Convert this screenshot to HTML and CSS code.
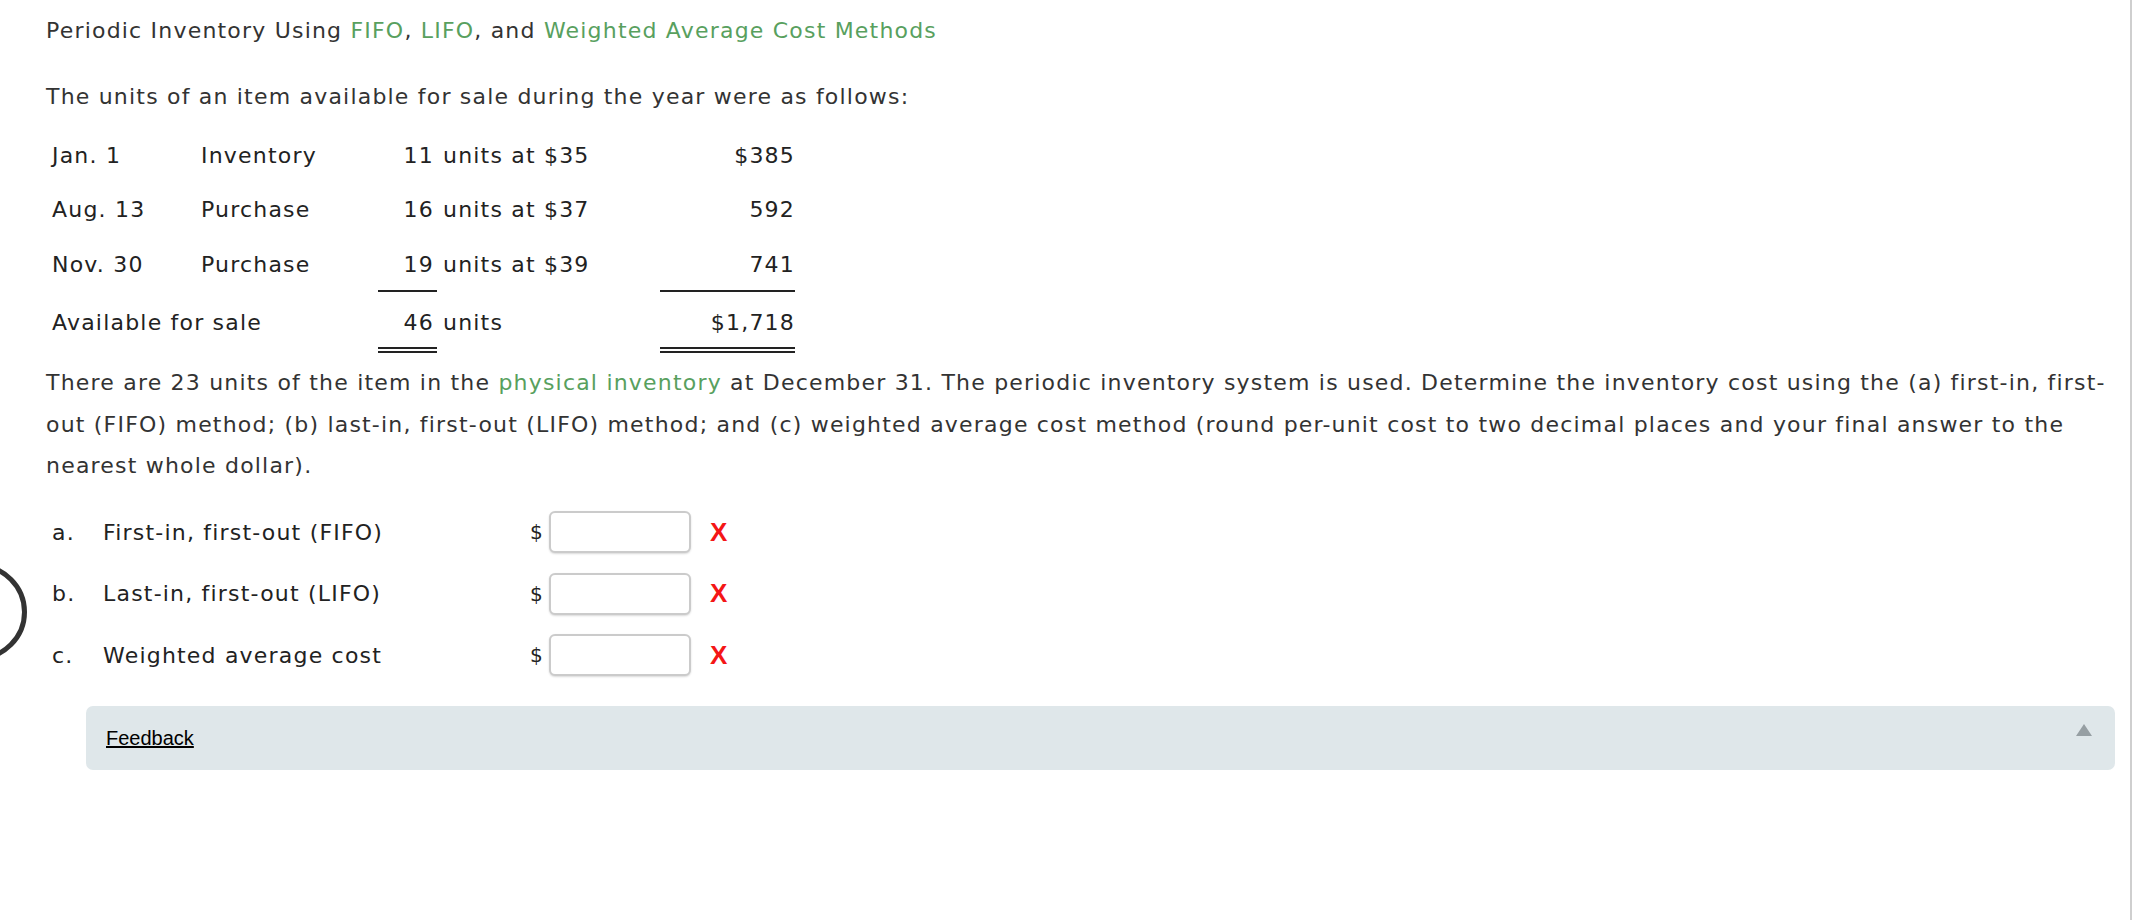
FILE: index.html
```html
<!DOCTYPE html>
<html>
<head>
<meta charset="utf-8">
<link rel="stylesheet" href="styles.css">
</head>
<body>
<div class="page">
  <svg class="ring" width="40" height="110" viewBox="0 0 40 110"><circle cx="-21.5" cy="55" r="46" fill="none" stroke="#333" stroke-width="5"/></svg>
  <p class="title">Periodic Inventory Using <span class="link">FIFO</span>, <span class="link">LIFO</span>, and <span class="link">Weighted Average Cost Methods</span></p>
  <p class="intro">The units of an item available for sale during the year were as follows:</p>
  <div class="ledger">
    <div class="c r1">Jan. 1</div><div class="c r1">Inventory</div><div class="c r1 num">11</div><div class="c r1 units">units at $35</div><div class="c r1 amt">$385</div>
    <div class="c r2">Aug. 13</div><div class="c r2">Purchase</div><div class="c r2 num">16</div><div class="c r2 units">units at $37</div><div class="c r2 amt">592</div>
    <div class="c r3">Nov. 30</div><div class="c r3">Purchase</div><div class="c r3 num line">19</div><div class="c r3 units">units at $39</div><div class="c r3 amt line">741</div>
    <div class="c r4 span2">Available for sale</div><div class="c r4 num dbl">46</div><div class="c r4 units">units</div><div class="c r4 amt dbl">$1,718</div>
  </div>
  <p class="body">There are 23 units of the item in the <span class="link">physical inventory</span> at December 31. The periodic inventory system is used. Determine the inventory cost using the (a) first-in, first-out (FIFO) method; (b) last-in, first-out (LIFO) method; and (c) weighted average cost method (round per-unit cost to two decimal places and your final answer to the nearest whole dollar).</p>
  <div class="answers">
    <div class="ans"><span class="letter">a.</span><span class="label">First-in, first-out (FIFO)</span><span class="cur">$</span><input class="box" type="text"><span class="wrong">X</span></div>
    <div class="ans"><span class="letter">b.</span><span class="label">Last-in, first-out (LIFO)</span><span class="cur">$</span><input class="box" type="text"><span class="wrong">X</span></div>
    <div class="ans"><span class="letter">c.</span><span class="label">Weighted average cost</span><span class="cur">$</span><input class="box" type="text"><span class="wrong">X</span></div>
  </div>
  <div class="feedback">
    <a class="fb-link" href="#">Feedback</a>
    <span class="tri"></span>
  </div>
</div>
</body>
</html>
```
FILE: styles.css
```css
html, body {
  margin: 0;
  padding: 0;
  background: #fff;
}
.page {
  position: relative;
  box-sizing: border-box;
  width: 2132px;
  min-height: 920px;
  padding: 0 15px 0 46px;
  border-right: 2px solid #cfcfcf;
  font-family: "DejaVu Sans", Verdana, sans-serif;
  font-size: 22px;
  letter-spacing: 1.2px;
  color: #333;
}
.ring {
  position: absolute;
  left: 0;
  top: 557px;
}
p {
  margin: 0;
}
.link {
  color: #58a05e;
}
.title {
  padding-top: 10px;
  line-height: 41px;
}
.intro {
  margin-top: 25px;
  line-height: 41px;
}
.ledger {
  margin-top: 11px;
  margin-left: 6px;
  display: grid;
  grid-template-columns: 149px 177px 59px 223px 135px;
  grid-template-rows: 54px 55px 55px 61px;
  color: #222;
}
.c {
  box-sizing: border-box;
  line-height: 27px;
  padding-top: 14px;
  white-space: nowrap;
}
.r4 {
  padding-top: 17px;
}
.span2 {
  grid-column: span 2;
}
.num {
  text-align: right;
  padding-right: 3px;
}
.units {
  padding-left: 6px;
}
.amt {
  text-align: right;
}
.line {
  border-bottom: 2px solid #222;
}
.dbl {
  border-bottom: 6px double #222;
}
.body {
  margin-top: 9px;
  line-height: 41.5px;
}
.answers {
  margin-top: 15px;
  display: flex;
  flex-direction: column;
}
.ans {
  height: 61.5px;
  display: flex;
  align-items: center;
  color: #222;
}
.letter {
  width: 51px;
  padding-left: 6px;
}
.label {
  width: 427px;
}
.cur {
  width: 19px;
  font-size: 20px;
  letter-spacing: 0;
}
.box {
  box-sizing: border-box;
  width: 142px;
  height: 42px;
  margin: 0;
  border: 2px solid #cbcbcb;
  border-radius: 6px;
  box-shadow: 0 1px 2px rgba(0,0,0,0.15);
  background: #fff;
}
.wrong {
  margin-left: 19px;
  font-family: "Liberation Sans", Arial, sans-serif;
  font-weight: bold;
  font-size: 26px;
  letter-spacing: 0;
  color: #f41616;
}
.feedback {
  margin-top: 20px;
  margin-left: 40px;
  height: 64px;
  box-sizing: border-box;
  padding: 0 23px 0 20px;
  background: #dfe7ea;
  border-radius: 7px;
  display: flex;
  align-items: center;
  justify-content: space-between;
  letter-spacing: 0;
}
.fb-link {
  font-family: "Liberation Sans", Arial, sans-serif;
  font-size: 20px;
  color: #000;
  text-decoration: underline;
  text-decoration-thickness: 2px;
}
.tri {
  width: 0;
  height: 0;
  border-left: 8px solid transparent;
  border-right: 8px solid transparent;
  border-bottom: 12px solid #969fa3;
  margin-bottom: 16px;
}
```
